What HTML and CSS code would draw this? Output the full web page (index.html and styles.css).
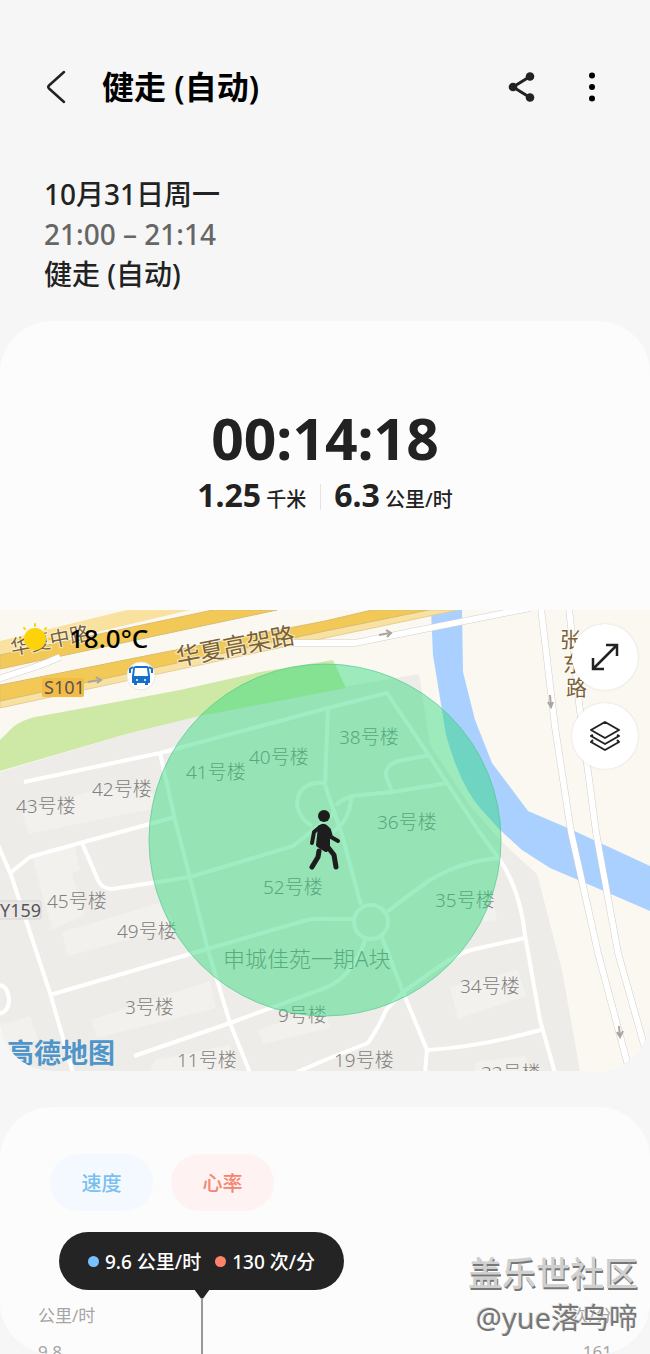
FILE: index.html
```html
<!DOCTYPE html>
<html lang="zh-CN">
<head>
    <meta charset="UTF-8">
    <meta name="viewport" content="width=device-width, initial-scale=1.0">
    <title>健走 (自动)</title>
    <link rel="stylesheet" href="styles.css">
</head>
<body>
    <!-- Top bar -->
    <header class="topbar">
        <button class="icon-btn" aria-label="返回">
            <svg width="36" height="36" viewBox="0 0 36 36"><path d="M26 3 L11 16.500 Q9.500 18 11 19.500 L26 33" fill="none" stroke="#222" stroke-width="2.500" stroke-linecap="round"/></svg>
        </button>
        <h1>健走 (自动)</h1>
        <button class="icon-btn" aria-label="分享">
            <svg width="36" height="36" viewBox="0 0 36 36"><path d="M26 7.500 L9 18 L26 28.500" fill="none" stroke="#222" stroke-width="3"/><g fill="#222"><circle cx="26" cy="7.500" r="4.300"/><circle cx="9" cy="18" r="4.300"/><circle cx="26" cy="28.500" r="4.300"/></g></svg>
        </button>
        <button class="icon-btn" aria-label="更多">
            <svg width="36" height="36" viewBox="0 0 36 36"><circle cx="18" cy="6.500" r="3"/><circle cx="18" cy="18" r="3"/><circle cx="18" cy="29.500" r="3"/></svg>
        </button>
    </header>

    <section class="info">
        <p>10月31日周一</p>
        <p class="time">21:00 – 21:14</p>
        <p>健走 (自动)</p>
    </section>

    <!-- Summary and map -->
    <section class="card summary">
        <div class="duration">00:14:18</div>
        <div class="stats">
            <span><b>1.25</b> 千米</span>
            <span><b>6.3</b> 公里/时</span>
        </div>
        <div class="map">
            <svg class="map-svg" viewBox="0 610 650 461" preserveAspectRatio="xMidYMid slice">
                <rect x="0" y="610" width="650" height="461" fill="#fbf8f2"/>
                <path d="M0 772 L130 733 L195 717 L325 690 L419 674 L430 745 L470 806 L505 845 L537 874 L562 970 L580 1071 H0 Z" fill="#eeece8"/>
                <path d="M0 740 L13 727 Q22 720 35 717 L100 705 L180 690 L260 672 L333 660 L346 688 L325 692 L200 716 L130 733 L0 771 Z" fill="#cee9a6"/>
                <!-- buildings -->
                <g fill="#f3f1ed">
                    <path d="M22 812 L95 790 L150 790 L157 808 L28 834 Z"/>
                    <path d="M33 859 L75 846 L80 870 L72 873 L84 915 L52 930 Z"/>
                    <path d="M62 932 L160 903 L178 926 L68 956 Z"/>
                    <path d="M91 1020 L210 981 L216 1008 L97 1038 Z"/>
                    <path d="M450 987 L518 970 L526 996 L458 1019 Z"/>
                    <path d="M480 902 L492 897 L497 920 L484 922 Z"/>
                    <path d="M258 1030 L325 1008 L330 1028 L263 1044 Z"/>
                    <path d="M0 1025 L30 1016 L38 1040 L5 1050 Z"/>
                    <path d="M155 1060 L230 1045 L235 1071 H150 Z"/>
                    <path d="M475 1062 L525 1056 L530 1071 H475 Z"/>
                </g>
                <!-- river -->
                <path d="M431 610 H462 L463 672 L475 720 L492 763 L528 811 L570 829 L650 866 V911 L590 885 L550 868 L522 850 L500 830 L480 808 Q460 785 446 735 L433 655 Z" fill="#a9d0ff"/>
                <!-- highways -->
                <path d="M0 641 L127 610 H190 L0 655 Z" fill="#f9e1a0"/>
                <path d="M0 655 L213 610 H277 L0 669 Z" fill="#f2c957" stroke="#d9bd70" stroke-width="1"/>
                <path d="M0 701 L325 631 L428 610 H458 L325 638 L0 708 Z" fill="#f9e1a0" stroke="#e3cd96" stroke-width="1"/>
                <path d="M0 685 L150 655 L325 621 L372 610 H428 L325 631 L0 701 Z" fill="#f2c957" stroke="#d9bd70" stroke-width="1"/>
                <g fill="none" stroke="#d3cfca" stroke-width="7">
                    <path d="M290 643 H355 L530 608"/>
                    <path d="M541 608 L555 727 L571 832 L598 953 L630 1073"/>
                    <path d="M569 608 L579 703 L596 832 L618 953 L652 1073"/>
                    <path d="M-2 679 Q20 672 32 668 T60 657"/>
                </g>
                <g fill="none" stroke="#fff" stroke-width="6">
                    <path d="M290 643 H355 L530 608"/>
                    <path d="M541 608 L555 727 L571 832 L598 953 L630 1073"/>
                    <path d="M569 608 L579 703 L596 832 L618 953 L652 1073"/>
                    <path d="M-2 679 Q20 672 32 668 T60 657"/>
                </g>
                <g fill="none" stroke="#aaa49c" stroke-width="2">
                    <path d="M379 635 L390 633 M386 630 L391 633 L387 637"/>
                    <path d="M88 682 L100 680 M96 677 L101 680 L97 683"/>
                    <path d="M550 695 L551 707 M548 702 L551 707 L553 702"/>
                    <path d="M619 1026 L620 1037 M617 1032 L620 1037 L623 1031"/>
                </g>
                <!-- footpaths -->
                <g fill="none" stroke="#fff" stroke-width="4" stroke-linejoin="round">
                    <path d="M24 782 L160 753 L328 708 L387 693 L430 757 L478 830 L500 860 Q520 890 525 935 L540 1020 L555 1073"/>
                    <path d="M160 753 L175 820 L190 878 L208 950 L230 1023 L250 1073"/>
                    <path d="M328 708 L325 785"/>
                    <path d="M336 805 Q345 796 360 795 L392 792 L448 783"/>
                    <path d="M430 755 L398 761 Q385 765 386 776 L392 792"/>
                    <path d="M351 798 Q350 820 333 832"/>
                    <path d="M325 783 Q300 781 297 802 Q298 818 312 826"/>
                    <path d="M325 785 L342 835 L361 905"/>
                    <path d="M-2 845 L11 875 L50 993 L73 1073"/>
                    <path d="M10 873 L30 857 L80 843 L135 828 L175 817"/>
                    <path d="M82 843 L98 880 Q102 889 112 889 L190 877 L293 846 L336 812"/>
                    <path d="M50 995 L190 954 L300 922 Q312 918 325 919 H354"/>
                    <circle cx="371" cy="922" r="17"/>
                    <path d="M387 912 Q410 894 430 880 Q460 862 498 858"/>
                    <path d="M525 938 L475 949 Q460 952 440 966 L403 992 L386 1010 Q380 1025 368 1043 L325 1060 L295 1073"/>
                    <path d="M382 937 L403 992 L427 1050 L425 1073"/>
                    <path d="M134 1056 L230 1023 L325 988 Q352 978 366 938"/>
                    <path d="M427 1050 Q480 1047 544 1029"/>
                    <path d="M-2 985 Q8 985 9 1000 Q9 1012 -2 1014"/>
                </g>
                <!-- labels -->
                <g class="house">
                    <text x="16" y="813">43号楼</text>
                    <text x="92" y="796">42号楼</text>
                    <text x="186" y="779">41号楼</text>
                    <text x="249" y="764">40号楼</text>
                    <text x="339" y="744">38号楼</text>
                    <text x="377" y="829">36号楼</text>
                    <text x="263" y="894">52号楼</text>
                    <text x="435" y="907">35号楼</text>
                    <text x="47" y="908">45号楼</text>
                    <text x="117" y="938">49号楼</text>
                    <text x="460" y="993">34号楼</text>
                    <text x="125" y="1014">3号楼</text>
                    <text x="278" y="1022">9号楼</text>
                    <text x="177" y="1067">11号楼</text>
                    <text x="334" y="1067">19号楼</text>
                    <text x="481" y="1080">33号楼</text>
                </g>
                <text class="estate" x="223" y="967">申城佳苑一期A块</text>
                <g class="road">
                    <text x="12" y="655" font-size="20" transform="rotate(-11 12 655)">华夏中路</text>
                    <text x="178" y="666" font-size="24" transform="rotate(-11 178 666)">华夏高架路</text>
                    <text x="560" y="647" font-size="21">张</text>
                    <text x="563" y="671" font-size="21">东</text>
                    <text x="566" y="695" font-size="21">路</text>
                </g>
                <rect x="42" y="678" width="42" height="19" rx="2" fill="#f3bb45"/>
                <text class="route" x="44" y="694">S101</text>
                <rect x="-4" y="901" width="45" height="18" rx="2" fill="#e9e8e6" stroke="#d5d5d5"/>
                <text class="route" x="0" y="917">Y159</text>

                <circle cx="325" cy="840" r="176" fill="#2ada79" fill-opacity=".45" stroke="#4fc98c" stroke-opacity=".7" stroke-width="1"/>
                <!-- bus stop -->
                <circle cx="141" cy="676" r="14" fill="#fff" stroke="#e8e8e8"/>
                <path d="M136 666 H147 Q149 666 149 669 L150 676 V683 H148 V685 H145 V683 H137 V685 H134 V683 H132 V676 L133 669 Q133 666 136 666 Z" fill="#1470c9"/>
                <path d="M133 667 L130 669 V673 M149 667 L152 669 V673" fill="none" stroke="#1470c9" stroke-width="2"/>
                <path d="M135 668 H147 L148 676 H134 Z" fill="#fff"/>
                <circle cx="137" cy="680" r="1" fill="#fff"/>
                <circle cx="145" cy="680" r="1" fill="#fff"/>
                <!-- walker -->
                <circle cx="324" cy="816" r="6" fill="#1d1d1d"/>
                <g fill="none" stroke="#1d1d1d" stroke-width="4" stroke-linecap="round" stroke-linejoin="round">
                    <path d="M320 827 L314 832 L312 843 M329 830 L331 837 L338 841"/>
                    <path d="M319 851 L318 857 L312 867 M327 846 L334 855 L336 867" stroke-width="5"/>
                    <path d="M320 827 Q324 824 328 829 L328 846 L326 850 L318 845 Z" fill="#1d1d1d"/>
                </g>
                <!-- weather -->
                <circle cx="35" cy="639" r="11" fill="#fdd20a"/>
                <path d="M35 624 V626 M46 628 L45 629 M24 628 L25 629 M49 639 H50 M20 639 H21" stroke="#fdd20a" stroke-width="2" stroke-linecap="round"/>
                <text class="temp" x="69" y="648">18.0°C</text>
                <text class="amap" x="7" y="1063">高德地图</text>
            </svg>
            <div class="map-tools">
                <button class="round-btn" aria-label="全屏">
                    <svg width="34" height="34" viewBox="0 0 34 34"><path d="M5 29 L29 5 M18 5 H29 V16 M5 18 V29 H16" fill="none" stroke="#222" stroke-width="2.500"/></svg>
                </button>
                <button class="round-btn" aria-label="图层">
                    <svg width="34" height="34" viewBox="0 0 34 34"><path d="M17 3 L31 11 L17 19 L3 11 Z M5 16 L3 17 L17 25 L31 17 L29 16 M5 21 L3 23 L17 31 L31 23 L29 21" fill="none" stroke="#222" stroke-width="2" stroke-linejoin="round"/></svg>
                </button>
            </div>
        </div>
    </section>

    <!-- Chart -->
    <section class="card chart">
        <div class="chips">
            <button class="chip speed">速度</button>
            <button class="chip heart">心率</button>
        </div>
        <div class="tooltip">
            <i class="dot blue"></i>9.6 公里/时
            <i class="dot red"></i>130 次/分
        </div>
        <div class="axis"><span>公里/时</span><span>次/分</span></div>
        <div class="axis values"><span>9.8</span><span>161</span></div>
    </section>

    <div class="watermark">
        <div class="site">盖乐世社区</div>
        <div>@yue落鸟啼</div>
    </div>
</body>
</html>
```

FILE: styles.css
```css
* { box-sizing: border-box; }
body { position: relative; margin: 0; background: #f6f6f6; color: #222; font-family: "Noto Sans", "Noto Sans CJK SC", sans-serif; overflow-x: hidden; }
h1, p { margin: 0; }
button { font-family: inherit; border: none; padding: 0; cursor: pointer; }

.topbar { display: flex; align-items: center; padding: 64px 40px 0 38px; height: 110px; }
.topbar h1 { flex: 1; margin-left: 28px; font-size: 32px; line-height: 46px; font-weight: 600; color: #000; }
.icon-btn { display: flex; background: none; margin-left: 34px; }
.icon-btn:first-child { margin-left: 0; }

.info { padding: 64px 44px 27px; font-size: 28px; line-height: 40px; font-weight: 500; }
.info .time { color: #666; }

.card { background: #fcfcfc; border-radius: 52px; overflow: hidden; }
.summary { padding-top: 82px; }
.duration { font-size: 57px; line-height: 70px; font-weight: 700; text-align: center; }
.stats { display: flex; justify-content: center; margin: 2px 0 92px; font-size: 20px; line-height: 40px; font-weight: 500; }
.stats span { height: 43px; padding: 0 14px; }
.stats span + span { background: linear-gradient(#e4e4e4, #e4e4e4) no-repeat left center / 1px 26px; }
.stats b { font-size: 32px; }

/* Map */
.map { position: relative; height: 461px; }
.map-svg { display: block; width: 100%; height: 100%; }
.house { font-size: 19px; font-weight: 300; fill: #808080; }
.estate { font-size: 22px; font-weight: 300; fill: #7d8783; }
.road { fill: #7a6238; stroke: #fff; stroke-opacity: .6; stroke-width: 2px; paint-order: stroke; }
.route { font-size: 18px; fill: #555; }
.temp { font-size: 26px; font-weight: 500; fill: #000; }
.amap { font-size: 27px; font-weight: 700; fill: #4f95c9; }
.map-tools { position: absolute; top: 14px; right: 12px; display: grid; gap: 13px; }
.round-btn { display: flex; align-items: center; justify-content: center; width: 66px; height: 66px; border-radius: 50%; background: #fff; box-shadow: 0 0 2px rgba(0, 0, 0, .15); }

/* Chart */
.chart { margin-top: 36px; padding: 47px 10px 0 38px; height: 247px; }
.chips { display: flex; gap: 18px; padding-left: 12px; }
.chip { width: 103px; height: 57px; border-radius: 29px; font-size: 20px; font-weight: 500; }
.speed { background: #f3f9fe; color: #79bff0; }
.heart { background: #fef3f2; color: #f58470; }
.tooltip { position: relative; display: flex; align-items: center; width: 285px; height: 58px; margin: 21px 0 0 21px; padding-left: 29px; border-radius: 29px; background: #242424; color: #fff; font-size: 19px; font-weight: 500; white-space: nowrap; }
.tooltip::before { content: ""; position: absolute; left: 135px; top: 57px; border: 8px solid transparent; border-top: 11px solid #242424; }
.tooltip::after { content: ""; position: absolute; left: 142px; top: 66px; width: 2px; height: 60px; background: #999; }
.dot { width: 11px; height: 11px; margin-right: 6px; border-radius: 50%; }
.blue { background: #78c0ff; }
.red { background: #ff836b; margin-left: 14px; }
.axis { display: flex; justify-content: space-between; margin-top: 14px; padding-right: 28px; font-size: 17px; line-height: 24px; color: #a5a5a5; }
.values { margin-top: 12px; }

.watermark { position: absolute; right: 12px; bottom: 15px; text-align: right; font-size: 29px; line-height: 42px; color: #777; text-shadow: -1px -1px 0 #ddd; }
.site { font-size: 34px; line-height: 48px; font-weight: 500; color: #d0d0d0; text-shadow: 1px 2px 0 #777; }
```
